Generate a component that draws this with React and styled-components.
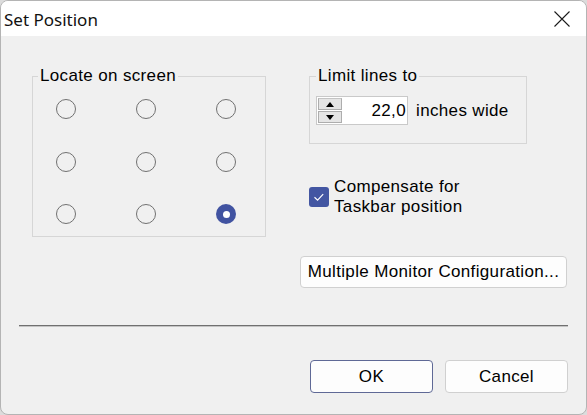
import React from "react";
import styled, { createGlobalStyle } from "styled-components";

const GlobalStyle = createGlobalStyle`
  html, body {
    margin: 0;
    padding: 0;
    background: #dcdcdc;
  }
  * {
    box-sizing: border-box;
  }
`;

function App() {
  const cells = [0, 1, 2, 3, 4, 5, 6, 7, 8];

  return (
    <>
      <GlobalStyle />
      <Window>
        <TitleBar>
          <Title>Set Position</Title>
          <CloseButton aria-label="Close">
            <svg width="16" height="16" viewBox="0 0 16 16">
              <path d="M0.5 0.5 L15.5 15.5 M15.5 0.5 L0.5 15.5" stroke="#1b1b1b" strokeWidth="1.1" fill="none" />
            </svg>
          </CloseButton>
        </TitleBar>

        <Body>
          <TopArea>
            <LocateGroup>
              <Caption $left={5}>Locate on screen</Caption>
              <RadioGrid>
                {cells.map((i) => (
                  <Radio key={i} $checked={i === 8} />
                ))}
              </RadioGrid>
            </LocateGroup>

            <RightColumn>
              <LimitGroup>
                <Caption $left={6}>Limit lines to</Caption>
                <SpinRow>
                  <Spinner>
                    <SpinButtons>
                      <SpinButton>
                        <svg width="8" height="5" viewBox="0 0 8 5">
                          <path d="M0 5 L4 0 L8 5 Z" fill="#000" />
                        </svg>
                      </SpinButton>
                      <SpinButton $bottom>
                        <svg width="8" height="5" viewBox="0 0 8 5">
                          <path d="M0 0 L8 0 L4 5 Z" fill="#000" />
                        </svg>
                      </SpinButton>
                    </SpinButtons>
                    <SpinField>22,0</SpinField>
                  </Spinner>
                  <Label>inches wide</Label>
                </SpinRow>
              </LimitGroup>

              <CheckRow>
                <CheckBox>
                  <svg width="20" height="20" viewBox="0 0 20 20">
                    <path d="M5.5 10.2 L8.6 13.2 L14.2 7.2" stroke="#fff" strokeWidth="1.2" fill="none" />
                  </svg>
                </CheckBox>
                <CheckText>
                  Compensate for
                  <br />
                  Taskbar position
                </CheckText>
              </CheckRow>

              <WideButton>Multiple Monitor Configuration...</WideButton>
            </RightColumn>
          </TopArea>

          <Separator />

          <Footer>
            <DialogButton $default>OK</DialogButton>
            <DialogButton>Cancel</DialogButton>
          </Footer>
        </Body>
      </Window>
    </>
  );
}

export default App;

const Window = styled.div`
  width: 587px;
  height: 415px;
  display: flex;
  flex-direction: column;
  border: 1px solid #b4b4b4;
  border-radius: 8px;
  overflow: hidden;
  background: #f0f0f0;
  font-family: "Liberation Sans", Arial, sans-serif;
  font-size: 17px;
  letter-spacing: 0.35px;
  color: #000;
`;

const TitleBar = styled.div`
  height: 35px;
  display: flex;
  align-items: center;
  justify-content: space-between;
  padding: 2px 16px 0 3px;
  background: #fff;
`;

const Title = styled.div`
  font-family: "Noto Sans", "Open Sans", sans-serif;
  font-size: 17px;
  letter-spacing: 0;
  color: #111;
`;

const CloseButton = styled.div`
  width: 16px;
  height: 16px;
  display: flex;
  margin-top: -1px;
`;

const Body = styled.div`
  flex: 1;
  display: flex;
  flex-direction: column;
  padding: 40px 18px 0 17px;
`;

const TopArea = styled.div`
  display: flex;
  align-items: flex-start;
  padding-left: 14px;
  gap: 34px;
`;

const GroupBox = styled.div`
  display: flex;
  flex-direction: column;
  border: 1px solid #d6d6d6;
`;

const LocateGroup = styled(GroupBox)`
  width: 234px;
  padding-bottom: 12px;
`;

const LimitGroup = styled(GroupBox)`
  width: 218px;
  margin-left: 9px;
  padding-bottom: 18px;
`;

const Caption = styled.div`
  align-self: flex-start;
  margin: -10px 0 0 ${(p) => p.$left}px;
  padding: 0 2px;
  line-height: 18px;
  background: #f0f0f0;
`;

const RadioGrid = styled.div`
  display: grid;
  grid-template-columns: repeat(3, 20px);
  column-gap: 60px;
  row-gap: 32.5px;
  margin-top: 14px;
  padding-left: 23px;
`;

const Radio = styled.span`
  width: 20px;
  height: 20px;
  border-radius: 50%;
  border: ${(p) => (p.$checked ? "none" : "1px solid #707070")};
  background: ${(p) => (p.$checked ? "#4153a1" : "transparent")};
  display: flex;
  align-items: center;
  justify-content: center;

  &::after {
    content: "";
    display: ${(p) => (p.$checked ? "block" : "none")};
    width: 7px;
    height: 7px;
    border-radius: 50%;
    background: #fff;
  }
`;

const RightColumn = styled.div`
  width: 268px;
  display: flex;
  flex-direction: column;
  align-items: flex-start;
`;

const SpinRow = styled.div`
  display: flex;
  align-items: center;
  gap: 8px;
  margin: 11px 0 0 6px;
`;

const Spinner = styled.div`
  width: 92px;
  height: 29px;
  display: flex;
  border: 1px solid #c9c9c9;
  background: #fff;
`;

const SpinButtons = styled.div`
  width: 26px;
  display: flex;
  flex-direction: column;
  padding: 1px;
  gap: 1px;
  background: #fff;
`;

const SpinButton = styled.div`
  flex: 1;
  display: flex;
  align-items: center;
  justify-content: center;
  background: #e5e5e5;
  border: 1px solid #adadad;
  border-top-color: ${(p) => (p.$bottom ? "#adadad" : "#c4c4c4")};
`;

const SpinField = styled.div`
  flex: 1;
  display: flex;
  align-items: center;
  justify-content: flex-end;
  padding-right: 1px;
`;

const Label = styled.span`
  line-height: 20px;
`;

const CheckRow = styled.div`
  display: flex;
  align-items: center;
  gap: 5px;
  margin: 33px 0 0 9px;
`;

const CheckBox = styled.span`
  width: 20px;
  height: 20px;
  border-radius: 3px;
  background: #4356a2;
  display: flex;
`;

const CheckText = styled.div`
  line-height: 20px;
`;

const WideButton = styled.div`
  width: 267px;
  height: 32px;
  margin-top: 39px;
  display: flex;
  align-items: center;
  justify-content: center;
  background: #fdfdfd;
  border: 1px solid #d0d0d0;
  border-radius: 4px;
`;

const Separator = styled.div`
  height: 2px;
  margin-top: 37px;
  margin-left: 1px;
  border-top: 1px solid #707070;
  border-bottom: 1px solid #c4c4c4;
`;

const Footer = styled.div`
  display: flex;
  justify-content: flex-end;
  gap: 12px;
  margin-top: 33px;
`;

const DialogButton = styled.div`
  width: 123px;
  height: 33px;
  display: flex;
  align-items: center;
  justify-content: center;
  background: #fdfdfd;
  border: 1px solid ${(p) => (p.$default ? "#5f6996" : "#d0d0d0")};
  border-radius: 4px;
`;
